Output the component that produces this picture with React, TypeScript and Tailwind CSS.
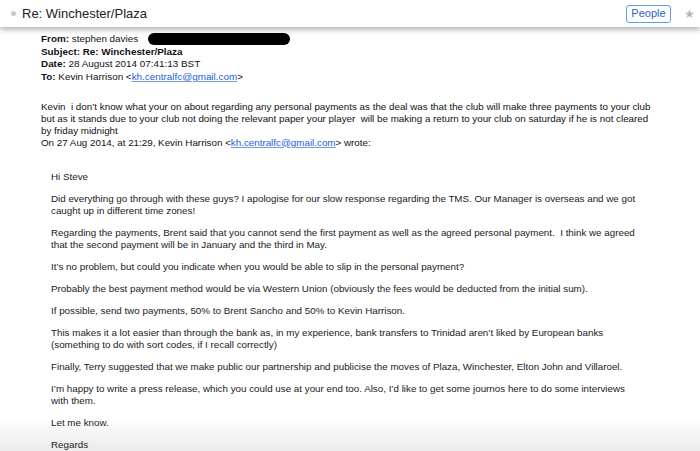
import React from 'react';

const quoted: string[][] = [
  ['Hi Steve'],
  [
    'Did everything go through with these guys? I apologise for our slow response regarding the TMS. Our Manager is overseas and we got',
    'caught up in different time zones!',
  ],
  [
    'Regarding the payments, Brent said that you cannot send the first payment as well as the agreed personal payment.\u00a0 I think we agreed',
    'that the second payment will be in January and the third in May.',
  ],
  ['It\u2019s no problem, but could you indicate when you would be able to slip in the personal payment?'],
  ['Probably the best payment method would be via Western Union (obviously the fees would be deducted from the initial sum).'],
  ['If possible, send two payments, 50% to Brent Sancho and 50% to Kevin Harrison.'],
  [
    'This makes it a lot easier than through the bank as, in my experience, bank transfers to Trinidad aren\u2019t liked by European banks',
    '(something to do with sort codes, if I recall correctly)',
  ],
  ['Finally, Terry suggested that we make public our partnership and publicise the moves of Plaza, Winchester, Elton John and Villaroel.'],
  [
    'I\u2019m happy to write a press release, which you could use at your end too. Also, I\u2019d like to get some journos here to do some interviews',
    'with them.',
  ],
  ['Let me know.'],
  ['Regards'],
];

const Mail = () => (
  <a className="text-[#1a5fd6] underline decoration-[#6f9be8]">kh.centralfc@gmail.com</a>
);

export default function App() {
  return (
    <div className="relative w-[700px] h-[451px] overflow-hidden bg-white font-['Liberation_Sans_Narrow','Arial_Narrow',sans-serif] text-[#111]">
      {/* bottom fade, sits behind the text */}
      <div className="absolute left-0 right-0 bottom-0 h-[34px] bg-gradient-to-b from-[rgba(255,255,255,0)] to-[#ebebeb]" />

      {/* title bar */}
      <div className="relative z-10 flex items-center h-[27px] bg-white pl-[11px] pr-[5px] shadow-[0_3px_5px_rgba(0,0,0,0.28)]">
        <span className="w-[5px] h-[5px] rounded-full bg-[#c8c8c8] mr-[6px]" />
        <span className="text-[13px] text-[#222]">Re: Winchester/Plaza</span>
        <div className="ml-auto flex items-center gap-[13px]">
          <button className="h-[18px] w-[45px] rounded-[3px] border border-[#5a9bf0] text-[11px] leading-none text-[#2a62c9]">
            People
          </button>
          <span className="text-[12px] text-[#b5b5b5] leading-none">&#9733;</span>
        </div>
      </div>

      <div className="relative">
        {/* headers */}
        <div className="pl-[41px] pt-[6px] text-[9.9px] leading-[12.7px]">
          <div className="flex items-center">
            <span><b>From:</b> stephen davies</span>
            <span className="ml-[10px] w-[142px] h-[12px] rounded-full bg-black" />
          </div>
          <div><b>Subject: Re: Winchester/Plaza</b></div>
          <div><b>Date:</b> 28 August 2014 07:41:13 BST</div>
          <div><b>To:</b> Kevin Harrison &lt;<Mail />&gt;</div>
        </div>

        {/* reply */}
        <div className="pl-[41px] pt-[17px] text-[9.8px] leading-[12px] whitespace-nowrap">
          <div>Kevin&nbsp; i don&rsquo;t know what your on about regarding any personal payments as the deal was that the club will make three payments to your club</div>
          <div>but as it stands due to your club not doing the relevant paper your player&nbsp; will be making a return to your club on saturday if he is not cleared</div>
          <div>by friday midnight</div>
          <div>On 27 Aug 2014, at 21:29, Kevin Harrison &lt;<Mail />&gt; wrote:</div>
        </div>

        {/* quoted */}
        <div className="pl-[51px] pt-[22px] flex flex-col gap-[10px] text-[9.8px] leading-[12px] whitespace-nowrap text-[#1a1a1a]">
          {quoted.map((p, i) => (
            <div key={i}>
              {p.map((l, j) => (
                <div key={j}>{l}</div>
              ))}
            </div>
          ))}
        </div>
      </div>
    </div>
  );
}
